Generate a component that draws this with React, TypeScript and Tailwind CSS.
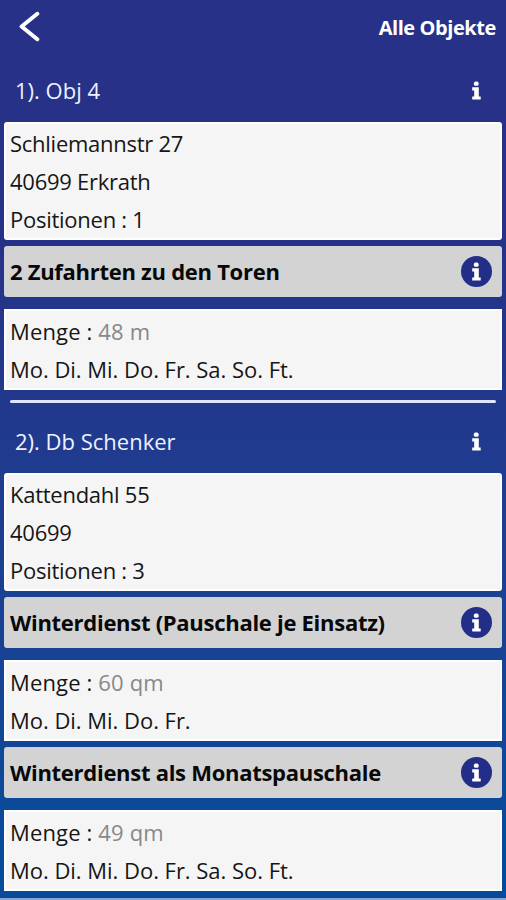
import clsx from "clsx";

interface IPosition {
  name: string;
  amount: string;
  days: string;
}

interface IObject {
  title: string;
  address: string[];
  positions: IPosition[];
}

const objects: IObject[] = [
  {
    title: "1). Obj 4",
    address: ["Schliemannstr 27", "40699 Erkrath", "Positionen : 1"],
    positions: [
      {
        name: "2 Zufahrten zu den Toren",
        amount: "48 m",
        days: "Mo. Di. Mi. Do. Fr. Sa. So. Ft.",
      },
    ],
  },
  {
    title: "2). Db Schenker",
    address: ["Kattendahl 55", "40699", "Positionen : 3"],
    positions: [
      {
        name: "Winterdienst (Pauschale je Einsatz)",
        amount: "60 qm",
        days: "Mo. Di. Mi. Do. Fr.",
      },
      {
        name: "Winterdienst als Monatspauschale",
        amount: "49 qm",
        days: "Mo. Di. Mi. Do. Fr. Sa. So. Ft.",
      },
    ],
  },
];

const InfoIcon = ({ plain }: { plain?: boolean }) => {
  return (
    <svg viewBox="0 0 31 31" className="h-[31px] w-[31px] shrink-0">
      <circle
        cx="15.5"
        cy="15.5"
        r="15.5"
        className={clsx(plain ? "fill-transparent" : "fill-[#232e88]")}
      />
      <rect x="12.9" y="6.6" width="4.7" height="4.2" rx="1.6" fill="#fff" />
      <path d="M11.2 12.3h6.6v9.2h1.9v3.1h-8.5v-3.1h2v-6.1h-2z" fill="#fff" />
    </svg>
  );
};

const PositionItem = ({ position }: { position: IPosition }) => {
  return (
    <div>
      <div className="flex h-[51.5px] items-center justify-between rounded-[3px] bg-[#d3d3d3] pl-[6px] pr-[10px]">
        <div className="whitespace-nowrap text-[22px] font-bold tracking-[-0.28px] text-[#080808]">
          {position.name}
        </div>
        <InfoIcon />
      </div>
      <div className="mt-[12px] h-[80.5px] border-2 border-white bg-[#f5f5f5] px-1 pt-px leading-[38px]">
        <div className="tracking-[0.15px]">
          Menge : <span className="text-[#888888]">{position.amount}</span>
        </div>
        <div className="whitespace-nowrap tracking-[-0.03px]">
          {position.days}
        </div>
      </div>
    </div>
  );
};

const ObjectItem = ({ object }: { object: IObject }) => {
  return (
    <div>
      <div className="flex h-[62px] items-center justify-between pl-[11px] pr-[10px] text-[#eef1ff]">
        <div>{object.title}</div>
        <InfoIcon plain />
      </div>
      <div className="flex flex-col gap-[6px]">
        <div className="h-[118px] rounded-[3px] border-2 border-white bg-[#f5f5f5] px-1 pt-[0.5px] leading-[38px] tracking-[-0.26px]">
          {object.address.map((line) => (
            <div key={line}>{line}</div>
          ))}
        </div>
        {object.positions.map((position) => (
          <PositionItem key={position.name} position={position} />
        ))}
      </div>
    </div>
  );
};

const App = () => {
  return (
    <div className="flex h-[900px] w-[506px] flex-col overflow-hidden border-b-2 border-[#8ba5cb] bg-linear-to-b from-[#263187] from-25% to-[#064b9b] to-95% font-['Open_Sans',sans-serif] text-[22px] text-[#161616]">
      <div className="flex h-[59.5px] shrink-0 items-center justify-between pb-[6px] pl-[18px] pr-[10px] text-white">
        <svg
          viewBox="0 0 24 32"
          className="h-8 w-6"
          fill="none"
          stroke="currentColor"
          strokeWidth="4"
          strokeLinecap="round"
          strokeLinejoin="round"
        >
          <path d="M19.3 2.8 3.6 15.5l15.7 12.7" />
        </svg>
        <div className="pt-[2px] text-[20px] font-bold tracking-[-0.42px]">
          Alle Objekte
        </div>
      </div>
      <div className="pl-1 pr-[4.5px]">
        {objects.map((object, index) => (
          <div key={object.title}>
            {index > 0 && (
              <div className="mx-[6px] mb-[8px] mt-[10px] h-[3px] rounded-full bg-[#dfe5fb]" />
            )}
            <ObjectItem object={object} />
          </div>
        ))}
      </div>
    </div>
  );
};

export default App;
